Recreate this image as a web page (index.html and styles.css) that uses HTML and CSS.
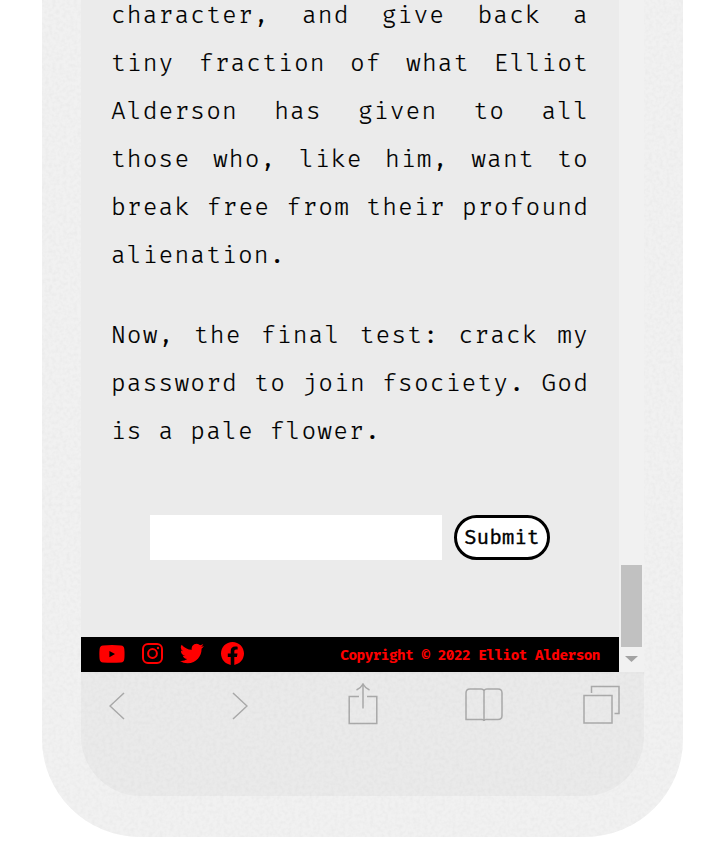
FILE: index.html
```html
<!DOCTYPE html>
<html lang="en">
<head>
<meta charset="utf-8">
<title>fsociety</title>
<link rel="stylesheet" href="styles.css">
</head>
<body>
<div class="phone">
  <svg class="grain" aria-hidden="true">
    <filter id="grain" x="0" y="0" width="100%" height="100%" color-interpolation-filters="sRGB">
      <feTurbulence type="fractalNoise" baseFrequency="0.28" numOctaves="2" seed="4"/>
      <feColorMatrix values="0 0 0 0 0.5  0 0 0 0 0.5  0 0 0 0 0.5  0.11 0 0 0 -0.04"/>
    </filter>
    <rect width="100%" height="100%" filter="url(#grain)"/>
  </svg>
  <div class="viewport">
    <main class="page">
      <div class="story">
        <p>
          <span class="line">character, and give back a</span>
          <span class="line">tiny fraction of what Elliot</span>
          <span class="line">Alderson has given to all</span>
          <span class="line">those who, like him, want to</span>
          <span class="line">break free from their profound</span>
          <span class="line last">alienation.</span>
        </p>
        <p>
          <span class="line">Now, the final test: crack my</span>
          <span class="line">password to join fsociety. God</span>
          <span class="line last">is a pale flower.</span>
        </p>
      </div>
      <form class="crack">
        <input type="text" aria-label="Password">
        <button type="button">Submit</button>
      </form>
      <footer>
        <div class="social">
          <svg width="26" height="18" viewBox="0 0 26 18"><path fill-rule="evenodd" d="M4 .5Q13-.4 22 .5Q25 .8 25.3 4Q25.8 9 25.3 14Q25 17.2 22 17.5Q13 18.2 4 17.5Q1 17.2.6 14Q.1 9 .6 4Q1 .8 4 .5ZM10.400 6V12.200L16 9Z"/></svg>
          <svg width="21" height="21" viewBox="0 0 21 21" class="outline"><rect x="1" y="1" width="19" height="19" rx="5"/><circle cx="10.5" cy="10.5" r="4.4"/><circle cx="16" cy="5" r="1.2" class="dot"/></svg>
          <svg width="24" height="21" viewBox="0 2 24 20"><path d="M23.95 4.57a10 10 0 0 1-2.82.77 4.96 4.96 0 0 0 2.16-2.72c-.95.55-2 .96-3.13 1.18a4.92 4.92 0 0 0-8.38 4.48C7.69 8.1 4.07 6.13 1.64 3.16a4.92 4.92 0 0 0 1.52 6.57 4.9 4.9 0 0 1-2.23-.61v.06a4.92 4.92 0 0 0 3.95 4.83 5 5 0 0 1-2.21.08 4.94 4.94 0 0 0 4.6 3.42A9.87 9.87 0 0 1 0 19.54a13.99 13.99 0 0 0 7.55 2.21c9.05 0 14-7.5 14-13.98 0-.21 0-.42-.02-.63a9.94 9.94 0 0 0 2.42-2.57z"/></svg>
          <svg width="23" height="23" viewBox="0 0 24 24"><path d="M24 12.07C24 5.45 18.63.07 12 .07S0 5.45 0 12.07c0 5.99 4.39 10.95 10.13 11.86v-8.39H7.08v-3.47h3.05V9.43c0-3.01 1.79-4.67 4.53-4.67 1.31 0 2.69.23 2.69.23v2.95h-1.51c-1.49 0-1.96.93-1.96 1.88v2.25h3.33l-.53 3.47h-2.8v8.39C19.61 23.02 24 18.06 24 12.07z"/></svg>
        </div>
        <small>Copyright © 2022 Elliot Alderson</small>
      </footer>
    </main>
    <div class="scrollbar"><div class="thumb"></div><div class="down"><i></i></div></div>
  </div>
  <nav class="toolbar">
    <svg class="back" width="16" height="28" viewBox="0 0 16 28"><path d="M15 1L1 14L15 27"/></svg>
    <svg class="forward" width="16" height="28" viewBox="0 0 16 28"><path d="M1 1L15 14L1 27"/></svg>
    <svg class="share" width="30" height="42" viewBox="0 0 30 42"><path d="M11 13.500H1.200V40.500H28.800V13.500H19M15 25.500V1M8.500 7Q13 5 15 1Q17 5 21.500 7"/></svg>
    <svg class="book" width="38" height="34" viewBox="0 0 38 34"><path d="M19 3Q18.500 1 16 1H5Q1 1 1 5V31.500H17Q19 31.500 19 33Q19 31.500 21 31.500H33Q37 31.500 37 27.500V5Q37 1 33 1H22Q19.500 1 19 3V32"/></svg>
    <svg class="tabs" width="37" height="39" viewBox="0 0 37 39"><path d="M1 10.500H29V38H1ZM8.500 8V1.500H36V28.500H31.500"/></svg>
  </nav>
</div>
</body>
</html>
```
FILE: styles.css
```css
* { box-sizing: border-box; }
body {
  margin: 0;
  height: 848px;
  overflow: hidden;
  background: #fff;
  font-family: "Fira Code", "Fira Mono", "Liberation Mono", monospace;
  color: #000;
}
.phone {
  position: relative;
  width: 641px;
  height: 837px;
  margin-left: 42px;
  padding: 0 39px;
  overflow: hidden;
  background: #f1f1f1;
  border-radius: 0 0 98px 98px;
}
.grain {
  position: absolute;
  inset: 0;
  width: 100%;
  height: 100%;
  z-index: 1;
  pointer-events: none;
}
.viewport {
  position: relative;
  z-index: 2;
  display: flex;
  height: 672px;
}
.page {
  display: flex;
  flex-direction: column;
  width: 538px;
  background: #ebebeb;
}
.story {
  margin-top: -8px;
  padding: 0 30px;
  font-size: 24px;
  line-height: 48px;
  letter-spacing: 1.1px;
  font-weight: 300;
  -webkit-text-stroke: .12px #000;
}
.story p { margin: 0 0 32px; }
.line {
  display: block;
  white-space: nowrap;
  text-align: justify;
  text-align-last: justify;
}
.last { text-align-last: left; }
.crack {
  display: flex;
  justify-content: center;
  gap: 12px;
  margin: 27px 0 77px;
}
.crack input {
  width: 292px;
  height: 45px;
  padding: 0 8px;
  border: 0;
  background: #fff;
}
.crack button {
  width: 96px;
  height: 45px;
  padding: 0;
  border: 3px solid #000;
  border-radius: 23px;
  background: #fff;
  color: #000;
  font: 400 20px "Fira Code", "Fira Mono", "Liberation Mono", monospace;
  letter-spacing: .25px;
  -webkit-text-stroke: .4px #000;
}
footer {
  display: flex;
  align-items: center;
  justify-content: space-between;
  height: 35px;
  padding: 0 19px 0 18px;
  background: #000;
  color: #f00;
}
.social {
  display: flex;
  align-items: center;
  gap: 17px;
  margin-top: -2px;
}
.social svg { fill: #f00; }
.social .outline { fill: none; stroke: #f00; stroke-width: 2; }
.social .dot { fill: #f00; stroke: none; }
footer small { margin-top: 1px; font-size: 14px; font-weight: 700; letter-spacing: -.5px; }
.scrollbar {
  display: flex;
  flex-direction: column;
  justify-content: flex-end;
  width: 25px;
  padding: 0 2px;
  background: #f1f1f1;
}
.thumb { height: 82px; background: #c1c1c1; }
.down { height: 25px; padding: 9px 0 0 4px; }
.down i {
  display: block;
  width: 13px;
  height: 6px;
  background: #a3a3a3;
  clip-path: polygon(0 0, 100% 0, 50% 100%);
}
.toolbar {
  display: flex;
  align-items: flex-start;
  height: 124px;
  padding: 8px 0 0 28px;
  background: #eaeaea;
  border-top: 2px solid #e7e7e7;
  border-radius: 0 0 60px 60px;
}
.toolbar svg { fill: none; stroke: #a9a9a9; stroke-width: 1.5; }
.back { margin-top: 10px; }
.forward { margin: 10px 0 0 107px; }
.share { margin: 1px 0 0 100px; }
.book { margin: 6px 0 0 87px; }
.tabs { margin: 3px 0 0 80px; }
```
